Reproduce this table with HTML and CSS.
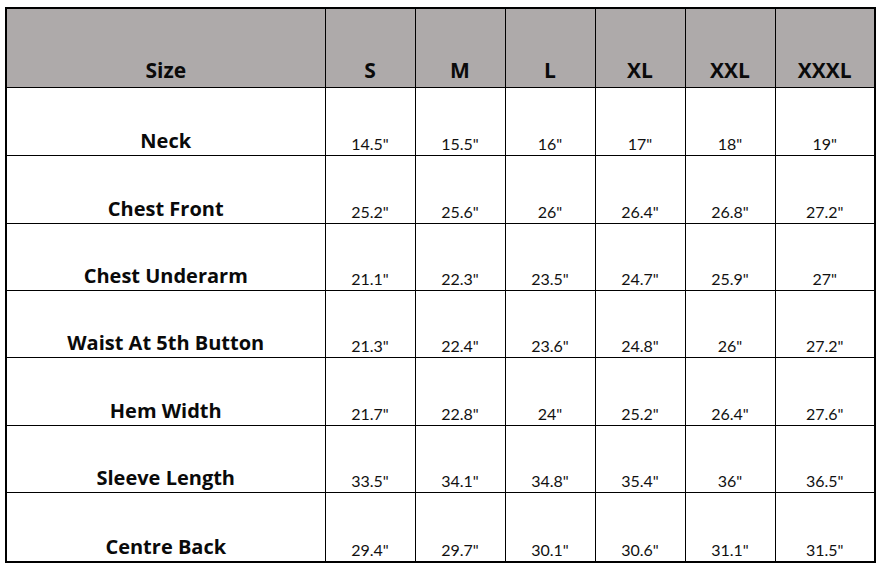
FILE: index.html
```html
<!DOCTYPE html>
<html>
<head>
<meta charset="utf-8">
<link rel="stylesheet" href="styles.css">
</head>
<body>
<table class="size-chart">
  <colgroup>
    <col class="col-label">
    <col class="col-size"><col class="col-size"><col class="col-size">
    <col class="col-size"><col class="col-size"><col class="col-last">
  </colgroup>
  <thead>
    <tr class="head-row">
      <th>Size</th><th>S</th><th>M</th><th>L</th><th>XL</th><th>XXL</th><th>XXXL</th>
    </tr>
  </thead>
  <tbody>
    <tr class="r68"><th>Neck</th><td>14.5"</td><td>15.5"</td><td>16"</td><td>17"</td><td>18"</td><td>19"</td></tr>
    <tr class="r68"><th>Chest Front</th><td>25.2"</td><td>25.6"</td><td>26"</td><td>26.4"</td><td>26.8"</td><td>27.2"</td></tr>
    <tr class="r67"><th>Chest Underarm</th><td>21.1"</td><td>22.3"</td><td>23.5"</td><td>24.7"</td><td>25.9"</td><td>27"</td></tr>
    <tr class="r67"><th>Waist At 5th Button</th><td>21.3"</td><td>22.4"</td><td>23.6"</td><td>24.8"</td><td>26"</td><td>27.2"</td></tr>
    <tr class="r68"><th>Hem Width</th><td>21.7"</td><td>22.8"</td><td>24"</td><td>25.2"</td><td>26.4"</td><td>27.6"</td></tr>
    <tr class="r67"><th>Sleeve Length</th><td>33.5"</td><td>34.1"</td><td>34.8"</td><td>35.4"</td><td>36"</td><td>36.5"</td></tr>
    <tr class="r70"><th>Centre Back</th><td>29.4"</td><td>29.7"</td><td>30.1"</td><td>30.6"</td><td>31.1"</td><td>31.5"</td></tr>
  </tbody>
</table>
</body>
</html>
```

FILE: styles.css
```css
html, body {
  margin: 0;
  padding: 0;
  background: #ffffff;
}

body {
  padding: 7px 0 0 5px;
  font-family: "Open Sans", Lato, "Liberation Sans", sans-serif;
  color: #000;
}

.size-chart {
  border-collapse: collapse;
  table-layout: fixed;
  width: 869px;
  border: 2px solid #000;
}

.col-label { width: 319px; }
.col-size { width: 90px; }
.col-last { width: 100px; }

.size-chart th,
.size-chart td {
  border: 1px solid #000;
  padding: 0;
  text-align: center;
  vertical-align: bottom;
  white-space: nowrap;
}

.head-row {
  height: 79px;
  background: #aeaaaa;
}

.size-chart .head-row th {
  font-weight: 700;
  font-size: 21px;
  line-height: 21px;
  padding-bottom: 6px;
  color: #0a0a0a;
}

.size-chart tbody th {
  font-weight: 700;
  font-size: 20px;
  line-height: 20px;
  padding-bottom: 4px;
  color: #0a0a0a;
}

.size-chart tbody td {
  font-family: Lato, "Open Sans", sans-serif;
  font-weight: 400;
  font-size: 16px;
  line-height: 16px;
  padding-bottom: 3px;
  color: #111;
}

.r67 { height: 67px; }
.r68 { height: 68px; }
.r70 { height: 70px; }
```
